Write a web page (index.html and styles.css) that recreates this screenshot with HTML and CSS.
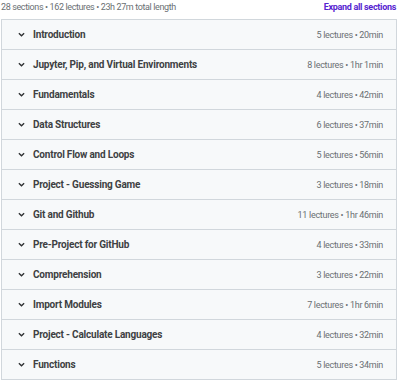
FILE: index.html
```html
<!DOCTYPE html>
<html lang="en">

<head>
    <meta charset="UTF-8" />
    <meta name="viewport" content="width=device-width, initial-scale=1" />
    <title>Course content</title>
    <link rel="stylesheet" href="styles.css">
</head>

<body>
    <div class="content">
        <div class="summary">
            <span class="stats">28 sections • 162 lectures • 23h 27m total length</span>
            <button class="expand-all">Expand all sections</button>
        </div>
        <div class="sections">
            <div class="section">
                <span class="chevron"><svg viewBox="0 0 8 5"><path d="M1 1l3 3 3-3"/></svg></span>
                <span class="title">Introduction</span>
                <span class="info">5 lectures • 20min</span>
            </div>
            <div class="section">
                <span class="chevron"><svg viewBox="0 0 8 5"><path d="M1 1l3 3 3-3"/></svg></span>
                <span class="title">Jupyter, Pip, and Virtual Environments</span>
                <span class="info">8 lectures • 1hr 1min</span>
            </div>
            <div class="section">
                <span class="chevron"><svg viewBox="0 0 8 5"><path d="M1 1l3 3 3-3"/></svg></span>
                <span class="title">Fundamentals</span>
                <span class="info">4 lectures • 42min</span>
            </div>
            <div class="section">
                <span class="chevron"><svg viewBox="0 0 8 5"><path d="M1 1l3 3 3-3"/></svg></span>
                <span class="title">Data Structures</span>
                <span class="info">6 lectures • 37min</span>
            </div>
            <div class="section">
                <span class="chevron"><svg viewBox="0 0 8 5"><path d="M1 1l3 3 3-3"/></svg></span>
                <span class="title">Control Flow and Loops</span>
                <span class="info">5 lectures • 56min</span>
            </div>
            <div class="section">
                <span class="chevron"><svg viewBox="0 0 8 5"><path d="M1 1l3 3 3-3"/></svg></span>
                <span class="title">Project - Guessing Game</span>
                <span class="info">3 lectures • 18min</span>
            </div>
            <div class="section">
                <span class="chevron"><svg viewBox="0 0 8 5"><path d="M1 1l3 3 3-3"/></svg></span>
                <span class="title">Git and Github</span>
                <span class="info">11 lectures • 1hr 46min</span>
            </div>
            <div class="section">
                <span class="chevron"><svg viewBox="0 0 8 5"><path d="M1 1l3 3 3-3"/></svg></span>
                <span class="title">Pre-Project for GitHub</span>
                <span class="info">4 lectures • 33min</span>
            </div>
            <div class="section">
                <span class="chevron"><svg viewBox="0 0 8 5"><path d="M1 1l3 3 3-3"/></svg></span>
                <span class="title">Comprehension</span>
                <span class="info">3 lectures • 22min</span>
            </div>
            <div class="section">
                <span class="chevron"><svg viewBox="0 0 8 5"><path d="M1 1l3 3 3-3"/></svg></span>
                <span class="title">Import Modules</span>
                <span class="info">7 lectures • 1hr 6min</span>
            </div>
            <div class="section">
                <span class="chevron"><svg viewBox="0 0 8 5"><path d="M1 1l3 3 3-3"/></svg></span>
                <span class="title">Project - Calculate Languages</span>
                <span class="info">4 lectures • 32min</span>
            </div>
            <div class="section">
                <span class="chevron"><svg viewBox="0 0 8 5"><path d="M1 1l3 3 3-3"/></svg></span>
                <span class="title">Functions</span>
                <span class="info">5 lectures • 34min</span>
            </div>
        </div>
    </div>
</body>

</html>
```

FILE: styles.css
```css
body {
    margin: 0;
    background-color: #fff;
    color: #2d2f31;
    font-family: Roboto, 'Noto Sans', sans-serif;
}

.content {
    padding: 0 3px 0 1px;
}

.summary {
    display: flex;
    justify-content: space-between;
    align-items: flex-start;
    height: 19px;
    line-height: 14px;
}

.stats {
    font-size: 9px;
    letter-spacing: -0.38px;
    color: #6a6f73;
}

.expand-all {
    font-family: inherit;
    font-size: 9px;
    letter-spacing: -0.3px;
    line-height: 14px;
    font-weight: 700;
    color: #5624d0;
    background: none;
    border: none;
    padding: 0 1px 0 0;
    cursor: pointer;
}

.sections {
    border: 1px solid #d1d7dc;
}

.section {
    display: flex;
    align-items: center;
    height: 29px;
    padding: 0 13px 0 16px;
    background-color: #f7f9fa;
    border-bottom: 1px solid #d1d7dc;
}

.section:last-child {
    border-bottom: none;
}

.chevron {
    display: flex;
    width: 15px;
}

.chevron svg {
    width: 7px;
    height: 5px;
    fill: none;
    stroke: #2d2f31;
    stroke-width: 1.5;
}

.title {
    flex: 1;
    font-size: 10px;
    letter-spacing: -0.2px;
    font-weight: 700;
    color: #3e4143;
}

.info {
    font-size: 9px;
    letter-spacing: -0.3px;
    color: #6a6f73;
}
```
